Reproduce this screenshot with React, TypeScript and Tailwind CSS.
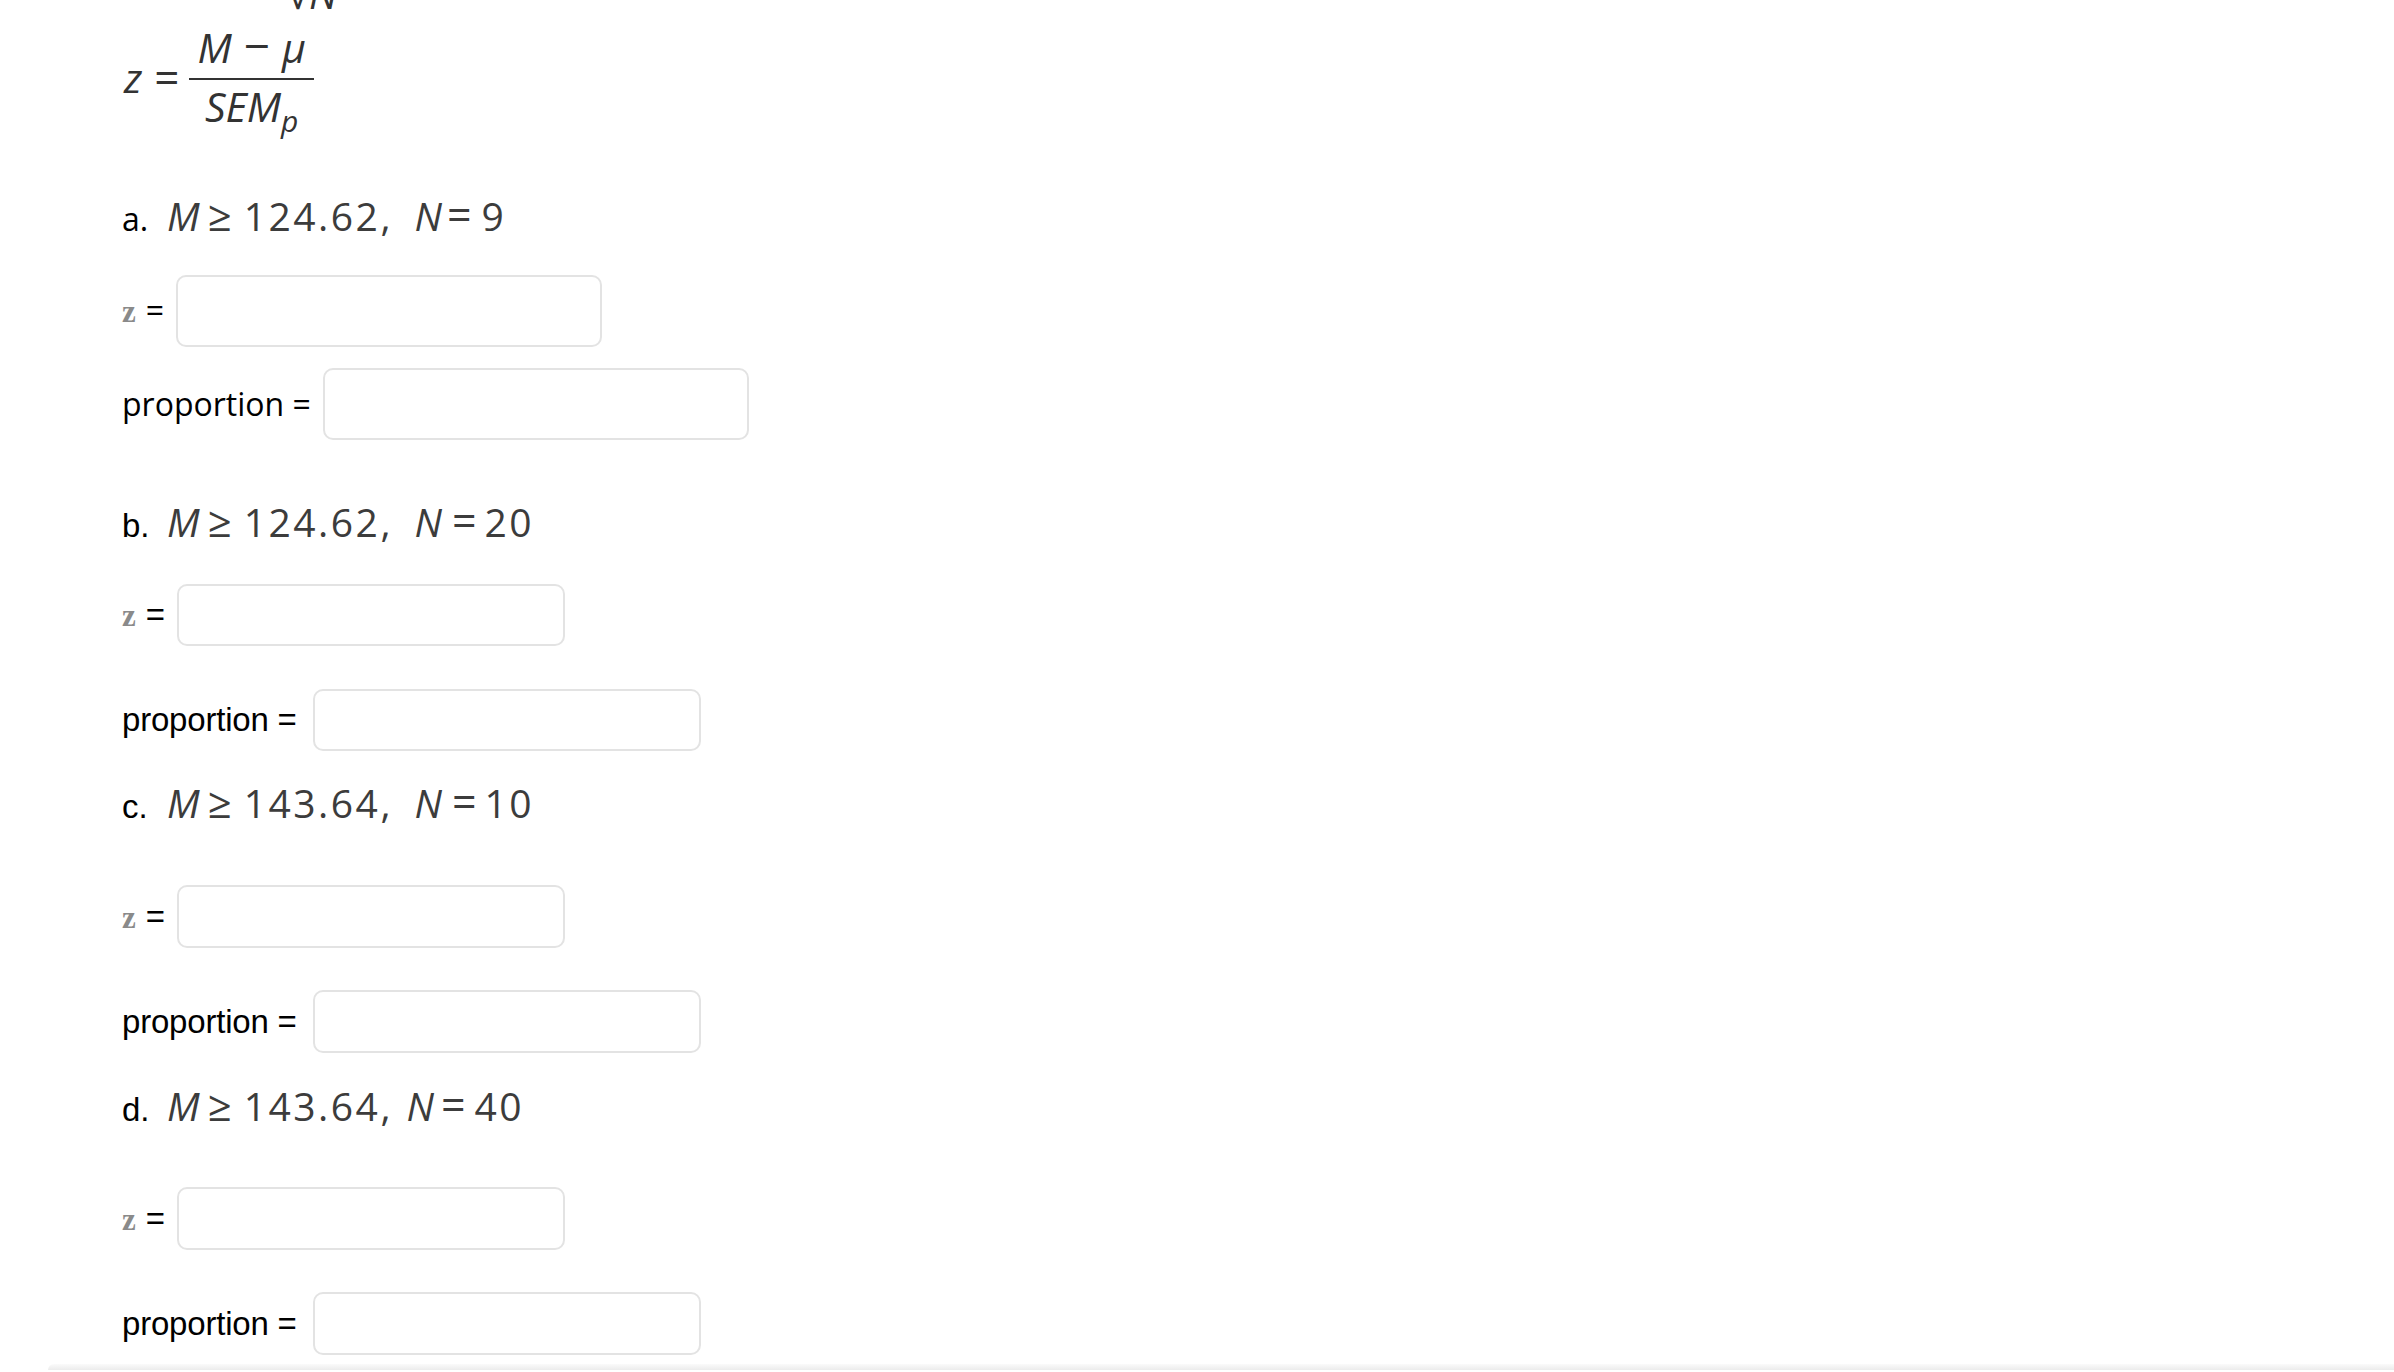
import React from "react";

function Box({ cls }: { cls: string }) {
  return <div className={cls} />;
}

export default function App() {
  return (
    <div className="min-h-screen bg-white flex flex-col pl-[122px] overflow-hidden">
      {/* cut-off previous formula (√N) */}
      <div className="-mt-[28px] h-[44px] leading-[44px] text-[40px] font-['Open_Sans',sans-serif] text-[#333] pl-[165px] whitespace-nowrap">
        √<i>N</i>
      </div>

      {/* z = (M − μ) / SEM_p */}
      <div className="mt-[10px] flex items-center font-['Open_Sans',sans-serif] text-[41px] leading-[44px] text-[#333]">
        <i className="ml-[2px]">z</i>
        <span className="ml-[12px] text-[44px]">=</span>
        <div className="ml-[10px] flex flex-col items-center">
          <div className="-mt-[3px] h-[44px] px-[8px] whitespace-nowrap">
            <i>M</i>
            <span className="mx-[12px] text-[46px]">−</span>
            <i>μ</i>
          </div>
          <div className="mt-[11px] h-[2px] w-full bg-[#333]" />
          <div className="mt-[4px] h-[44px] px-[8px] whitespace-nowrap">
            <i>SEM</i>
            <i className="text-[30px] relative top-[10px]">p</i>
          </div>
        </div>
      </div>

      {/* a */}
      <div className="mt-[62px] h-[50px] leading-[50px] flex items-baseline font-['Open_Sans',sans-serif] text-[39px] whitespace-nowrap">
        <span className="w-[45px] text-[32px] text-black">a.</span>
        <span className="text-[#3c3c3c]">
          <i>M</i>
          <span className="ml-[8px] mr-[12px] text-[42px]">≥</span>
          <span className="tracking-[2.5px]">124.62</span>
          <span>,</span>
          <i className="ml-[24px]">N</i>
          <span className="ml-[5px] mr-[10px] text-[43px]">=</span>
          <span className="tracking-[2.5px]">9</span>
        </span>
      </div>
      <div className="mt-[35px] flex items-center gap-[12px]">
        <span className="flex items-baseline whitespace-nowrap">
          <span className="font-['Liberation_Serif',serif] font-bold text-[31px] text-[#8a8a8a]">z</span>
          <span className="ml-[10px] font-['Open_Sans',sans-serif] text-[32px] text-black">=</span>
        </span>
        <Box cls="w-[426px] h-[72px] border-2 border-[#e3e3e3] rounded-[10px] bg-white" />
      </div>
      <div className="mt-[21px] flex items-center gap-[12px]">
        <span className="font-['Open_Sans',sans-serif] text-[32px] text-black whitespace-nowrap">proportion =</span>
        <Box cls="w-[426px] h-[72px] border-2 border-[#e3e3e3] rounded-[10px] bg-white" />
      </div>

      {/* b */}
      <div className="mt-[56px] h-[50px] leading-[50px] flex items-baseline font-['Open_Sans',sans-serif] text-[39px] whitespace-nowrap">
        <span className="w-[45px] font-['Liberation_Sans',Arial,sans-serif] text-[33px] text-black">b.</span>
        <span className="text-[#3c3c3c]">
          <i>M</i>
          <span className="ml-[8px] mr-[12px] text-[42px]">≥</span>
          <span className="tracking-[2.5px]">124.62</span>
          <span>,</span>
          <i className="ml-[24px]">N</i>
          <span className="ml-[10px] mr-[8px] text-[43px]">=</span>
          <span className="tracking-[2.5px]">20</span>
        </span>
      </div>
      <div className="mt-[38px] flex items-center gap-[12px]">
        <span className="flex items-baseline whitespace-nowrap">
          <span className="font-['Liberation_Serif',serif] font-bold text-[31px] text-[#8a8a8a]">z</span>
          <span className="ml-[10px] font-['Liberation_Sans',Arial,sans-serif] text-[33px] text-black">=</span>
        </span>
        <Box cls="w-[388px] h-[62px] border-2 border-[#e3e3e3] rounded-[10px] bg-white" />
      </div>
      <div className="mt-[43px] flex items-center gap-[16px]">
        <span className="font-['Liberation_Sans',Arial,sans-serif] text-[33px] tracking-[-0.2px] text-black whitespace-nowrap">proportion =</span>
        <Box cls="w-[388px] h-[62px] border-2 border-[#e3e3e3] rounded-[10px] bg-white" />
      </div>

      {/* c */}
      <div className="mt-[26px] h-[50px] leading-[50px] flex items-baseline font-['Open_Sans',sans-serif] text-[39px] whitespace-nowrap">
        <span className="w-[45px] font-['Liberation_Sans',Arial,sans-serif] text-[33px] text-black">c.</span>
        <span className="text-[#3c3c3c]">
          <i>M</i>
          <span className="ml-[8px] mr-[12px] text-[42px]">≥</span>
          <span className="tracking-[2.5px]">143.64</span>
          <span>,</span>
          <i className="ml-[24px]">N</i>
          <span className="ml-[10px] mr-[8px] text-[43px]">=</span>
          <span className="tracking-[2.5px]">10</span>
        </span>
      </div>
      <div className="mt-[58px] flex items-center gap-[12px]">
        <span className="flex items-baseline whitespace-nowrap">
          <span className="font-['Liberation_Serif',serif] font-bold text-[31px] text-[#8a8a8a]">z</span>
          <span className="ml-[10px] font-['Liberation_Sans',Arial,sans-serif] text-[33px] text-black">=</span>
        </span>
        <Box cls="w-[388px] h-[63px] border-2 border-[#e3e3e3] rounded-[10px] bg-white" />
      </div>
      <div className="mt-[42px] flex items-center gap-[16px]">
        <span className="font-['Liberation_Sans',Arial,sans-serif] text-[33px] tracking-[-0.2px] text-black whitespace-nowrap">proportion =</span>
        <Box cls="w-[388px] h-[63px] border-2 border-[#e3e3e3] rounded-[10px] bg-white" />
      </div>

      {/* d */}
      <div className="mt-[27px] h-[50px] leading-[50px] flex items-baseline font-['Open_Sans',sans-serif] text-[39px] whitespace-nowrap">
        <span className="w-[45px] font-['Liberation_Sans',Arial,sans-serif] text-[33px] text-black">d.</span>
        <span className="text-[#3c3c3c]">
          <i>M</i>
          <span className="ml-[8px] mr-[12px] text-[42px]">≥</span>
          <span className="tracking-[2.5px]">143.64</span>
          <span>,</span>
          <i className="ml-[16px]">N</i>
          <span className="ml-[7px] mr-[9px] text-[43px]">=</span>
          <span className="tracking-[2.5px]">40</span>
        </span>
      </div>
      <div className="mt-[57px] flex items-center gap-[12px]">
        <span className="flex items-baseline whitespace-nowrap">
          <span className="font-['Liberation_Serif',serif] font-bold text-[31px] text-[#8a8a8a]">z</span>
          <span className="ml-[10px] font-['Liberation_Sans',Arial,sans-serif] text-[33px] text-black">=</span>
        </span>
        <Box cls="w-[388px] h-[63px] border-2 border-[#e3e3e3] rounded-[10px] bg-white" />
      </div>
      <div className="mt-[42px] flex items-center gap-[16px]">
        <span className="font-['Liberation_Sans',Arial,sans-serif] text-[33px] tracking-[-0.2px] text-black whitespace-nowrap">proportion =</span>
        <Box cls="w-[388px] h-[63px] border-2 border-[#e3e3e3] rounded-[10px] bg-white" />
      </div>

      {/* bottom card edge */}
      <div className="mt-[9px] -ml-[74px] h-[6px] rounded-tl-[6px] bg-gradient-to-b from-[#fbfbfb] to-[#ececec]" />
    </div>
  );
}
